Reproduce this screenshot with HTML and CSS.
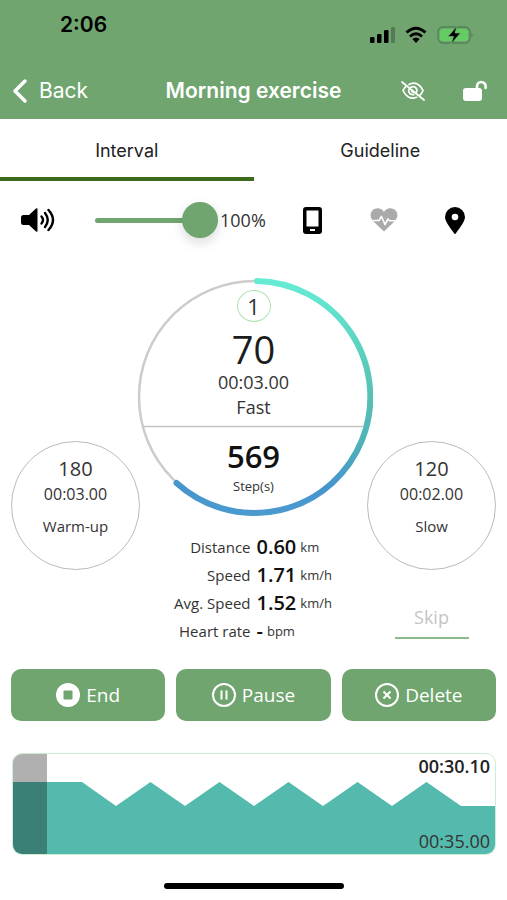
FILE: index.html
```html
<!DOCTYPE html>
<html lang="en">
<head>
<meta charset="utf-8">
<meta name="viewport" content="width=device-width, initial-scale=1">
<title>Morning exercise</title>
<link rel="stylesheet" href="styles.css">
</head>
<body>
<header class="header">
  <div class="status">
    <time class="clock">2:06</time>
    <div class="status-icons">
      <svg width="26" height="18" viewBox="0 0 26 18"><rect x="1" y="11" width="4.500" height="6" rx="1.200"/><rect x="8" y="8" width="4.500" height="9" rx="1.200"/><rect x="15" y="4" width="4.500" height="13" rx="1.200"/><rect x="22" y="1" width="4" height="16" rx="1.200" opacity=".25"/></svg>
      <svg width="22" height="18" viewBox="0 0 22 18"><g fill="none" stroke="#000" stroke-width="3"><path d="M1.500 6.500Q11-2 20.500 6.500"/><path d="M5 10.500Q11 5 17 10.500"/></g><path d="M7.300 13Q11 10 14.700 13L11 17Z"/></svg>
      <svg width="37" height="20" viewBox="0 0 37 20"><rect x="1" y="2" width="32" height="16" rx="5" fill="none" stroke="#4f8355" stroke-width="1.300"/><rect x="3" y="4" width="28" height="12" rx="3" fill="#65cc63"/><path d="M34.500 7.500q2 2.500 0 5z" fill="#43744a"/><path d="M20 1 11 11.500h5.500L14 19l9.500-11H18z" stroke="#70a56f" stroke-width=".8"/></svg>
    </div>
  </div>
  <nav class="nav">
    <a class="back" href="#"><svg width="16" height="26" viewBox="0 0 16 26"><path d="M13 3 3 13l10 10" fill="none" stroke="#fff" stroke-width="3.500" stroke-linecap="round" stroke-linejoin="round"/></svg>Back</a>
    <h1 class="title">Morning exercise</h1>
    <div class="nav-actions">
      <button class="icon-button" aria-label="Hide display"><svg width="24" height="20" viewBox="0 0 24 20" fill="none" stroke="#fff" stroke-width="1.700" stroke-linecap="round"><path d="M8 3.500C14-.2 19.500 3.800 22 9.500c-.8 2-1.800 3.500-3.200 4.800M15.500 16.300C9.500 18.800 4.500 15 2 9.500c.8-1.700 1.800-3.100 3-4.200"/><path d="M9.500 6.400c4-2.400 7.800 1.600 5.800 5M12.800 13.600C8.500 14 6.800 10.600 8.200 7.900M10.800 9.300a2 2 0 0 0 1.800 2"/><path d="M1 1l22 18"/></svg></button>
      <button class="icon-button" aria-label="Unlock"><svg width="24" height="22" viewBox="0 0 24 22"><rect x="0" y="8" width="19" height="13" rx="3" fill="#fff"/><path d="M14 9V6.300a4.300 4.300 0 0 1 8.600 0V8" fill="none" stroke="#fff" stroke-width="2.600" stroke-linecap="round"/></svg></button>
    </div>
  </nav>
</header>

<main>
  <nav class="tabs">
    <a class="tab tab-active" href="#">Interval</a>
    <a class="tab" href="#">Guideline</a>
  </nav>

  <section class="controls">
    <svg width="34" height="24" viewBox="0 0 34 24"><path d="M2.500 7H8l7-6.500q1.500-1 1.500.8v21.400q0 1.800-1.500.8L8 17H2.500Q0 17 0 14.500v-5Q0 7 2.500 7z"/><g fill="none" stroke="#000" stroke-width="2.400" stroke-linecap="round"><path d="M20.500 8.500q3 3.500 0 7"/><path d="M24 5q5.500 7 0 14"/><path d="M27.500 2q9 10 0 20"/></g></svg>
    <input class="volume" id="volume" type="range" min="0" max="100" value="100" aria-label="Volume">
    <label class="volume-value" for="volume">100%</label>
    <div class="indicators">
      <svg width="20" height="27" viewBox="0 0 20 27"><path fill-rule="evenodd" d="M3 0h13q3 0 3 3v21q0 3-3 3H3q-3 0-3-3V3Q0 0 3 0zm.5 3.500v16h12v-16zM7 22v2h5v-2z"/></svg>
      <svg width="28" height="24" viewBox="0 0 28 24"><path fill="#aaa" d="M14 23.500 3.500 13.500C-1 9 0 3 4.500 1 8-.6 12 .5 14 4c2-3.500 6-4.600 9.500-3C28 3 29 9 24.500 13.500z"/><path d="M3 12.500h6l2.500-4 3.500 8 3-5.500 1.500 1.800H25" fill="none" stroke="#fff" stroke-width="1.600" stroke-linejoin="round"/></svg>
      <svg width="20" height="27" viewBox="0 0 20 27"><path fill-rule="evenodd" d="M10 0a10 10 0 0 1 10 10c0 5-7 13-9 16.300q-1 1.300-2 0C7 23 0 15 0 10A10 10 0 0 1 10 0zm0 6.700a3.300 3.300 0 1 0 0 6.600 3.300 3.300 0 0 0 0-6.600z"/></svg>
    </div>
  </section>

  <section class="session">
    <div class="side">
      <div class="phase"><span class="phase-count">180</span><span class="phase-time">00:03.00</span><span class="phase-name">Warm-up</span></div>
    </div>
    <div class="center">
      <div class="ring">
        <svg class="ring-art" viewBox="0 0 238 238">
          <defs><linearGradient id="arc" gradientUnits="userSpaceOnUse" x1="0" y1="0" x2="0" y2="238"><stop offset="0" stop-color="#66edd5"/><stop offset=".5" stop-color="#57bfb3"/><stop offset=".68" stop-color="#50b4b8"/><stop offset=".88" stop-color="#4694cd"/><stop offset="1" stop-color="#4b9bcf"/></linearGradient></defs>
          <circle cx="120" cy="119" r="116" fill="none" stroke="#ccc" stroke-width="2.500"/>
          <path d="M8 148.500H228" stroke="#c4c4c4" stroke-width="1.300"/>
          <path d="M122 3A116 116 0 1 1 41.500 205" fill="none" stroke="url(#arc)" stroke-width="6" stroke-linecap="round"/>
        </svg>
        <div class="ring-text">
          <span class="round">1</span>
          <span class="target">70</span>
          <span class="ring-line">00:03.00</span>
          <span class="ring-line">Fast</span>
          <span class="steps">569</span>
          <span class="steps-unit">Step(s)</span>
        </div>
      </div>
      <dl class="stats">
        <dt>Distance</dt><dd><b>0.60</b> km</dd>
        <dt>Speed</dt><dd><b>1.71</b> km/h</dd>
        <dt>Avg. Speed</dt><dd><b>1.52</b> km/h</dd>
        <dt>Heart rate</dt><dd><b>-</b> bpm</dd>
      </dl>
    </div>
    <div class="side">
      <div class="phase"><span class="phase-count">120</span><span class="phase-time">00:02.00</span><span class="phase-name">Slow</span></div>
      <button class="skip">Skip</button>
    </div>
  </section>

  <section class="actions">
    <button class="action"><svg width="24" height="24" viewBox="0 0 24 24"><circle cx="12" cy="12" r="12" fill="#fff"/><rect x="7.500" y="7.500" width="9" height="9" rx="1" fill="#70a56f"/></svg>End</button>
    <button class="action"><svg width="24" height="24" viewBox="0 0 24 24" fill="none" stroke="#fff" stroke-width="2"><circle cx="12" cy="12" r="11"/><path d="M9.500 7.500v9M14.500 7.500v9"/></svg>Pause</button>
    <button class="action"><svg width="24" height="24" viewBox="0 0 24 24" fill="none" stroke="#fff" stroke-width="2"><circle cx="12" cy="12" r="11"/><path d="M8.500 8.500l7 7M15.500 8.500l-7 7"/></svg>Delete</button>
  </section>

  <section class="chart">
    <svg class="chart-art" viewBox="0 0 482 100" preserveAspectRatio="none">
      <path fill="#54baad" d="M0 28H69L103 52 137.500 28 172 52 206.500 28 241 52 275.500 28 310 52 344.500 28 379 52 413.500 28 448 52H482V100H0Z"/>
      <rect width="34" height="100" fill="#000" opacity=".31"/>
    </svg>
    <div class="chart-times"><strong>00:30.10</strong><span>00:35.00</span></div>
  </section>
</main>
<div class="home-bar"></div>
</body>
</html>
```
FILE: styles.css
```css
* { box-sizing: border-box; }

body {
  margin: 0;
  background: #fff;
  color: #333;
  font-family: "Open Sans", "Noto Sans", sans-serif;
}

svg { display: block; flex: none; }

button {
  border: 0;
  padding: 0;
  background: none;
  font: inherit;
  cursor: pointer;
}

a { color: inherit; text-decoration: none; }

.header {
  background: #70a56f;
  font-family: Inter, sans-serif;
}

.status {
  display: flex;
  justify-content: space-between;
  height: 62px;
  padding: 12px 33px 0 60px;
}

.clock {
  color: #000;
  font-size: 21px;
  font-weight: 600;
  line-height: 26px;
}

.status-icons {
  display: flex;
  align-items: center;
  gap: 10px;
  height: 46px;
}

.nav {
  display: grid;
  grid-template-columns: 1fr auto 1fr;
  align-items: center;
  height: 57px;
  padding: 0 12px;
  color: #fff;
  font-size: 21px;
}

.back { display: flex; align-items: center; gap: 11px; }

.title { margin: 0; font-size: 21px; font-weight: 600; }

.nav-actions {
  display: flex;
  justify-content: flex-end;
  align-items: center;
  gap: 38px;
  padding-right: 8px;
}

.tabs { display: flex; height: 62px; }

.tab {
  flex: 1;
  border-bottom: 4px solid transparent;
  color: #222;
  font-family: Inter, sans-serif;
  font-size: 18px;
  line-height: 63px;
  text-align: center;
}

.tab-active { border-color: #3c6b20; }

.controls {
  display: flex;
  align-items: center;
  height: 78px;
  padding: 0 19px 0 21px;
}

.volume {
  width: 123px;
  height: 36px;
  margin: 0 2px 0 40px;
  appearance: none;
  background: none;
}

.volume::-webkit-slider-runnable-track {
  height: 5px;
  border-radius: 3px;
  background: #70a56f;
}

.volume::-webkit-slider-thumb {
  width: 36px;
  height: 36px;
  margin-top: -16px;
  appearance: none;
  border-radius: 50%;
  background: #70a56f;
  box-shadow: 0 5px 12px rgba(0, 0, 0, .14);
}

.volume-value { font-size: 18px; }

.indicators {
  display: flex;
  flex: 1;
  align-items: center;
  justify-content: space-around;
  margin-left: 14px;
}

.session {
  display: grid;
  grid-template-columns: 129px 1fr 129px;
  margin-top: 19px;
  padding: 0 11px;
}

.side {
  display: flex;
  flex-direction: column;
  align-items: center;
  padding-top: 163px;
}

.phase {
  display: flex;
  flex-direction: column;
  align-items: center;
  width: 129px;
  height: 129px;
  padding-top: 14px;
  border: 1px solid #bbb;
  border-radius: 50%;
}

.phase-count { font-size: 20px; line-height: 26px; }
.phase-time { font-size: 16px; line-height: 24px; }
.phase-name { margin-top: 8px; font-size: 15px; line-height: 24px; }

.skip {
  width: 74px;
  height: 42px;
  margin-top: 27px;
  border-bottom: 2px solid #88bb8d;
  color: #c4c4c4;
  font-size: 18px;
}

.center {
  display: flex;
  flex-direction: column;
  align-items: center;
  margin: 0 -6px;
}

.ring { display: grid; width: 238px; }
.ring-art, .ring-text { grid-area: 1 / 1; }

.ring-text {
  display: flex;
  flex-direction: column;
  align-items: center;
  padding-top: 12px;
}

.round {
  width: 34px;
  height: 32px;
  border: 1px solid #a9e2b0;
  border-radius: 50%;
  font-size: 22px;
  line-height: 30px;
  text-align: center;
}

.target {
  margin-top: 6px;
  color: #1c1c1c;
  font-size: 38px;
  line-height: 42px;
}

.ring-line { font-size: 18px; line-height: 25px; }

.steps {
  margin-top: 16px;
  color: #111;
  font-size: 31px;
  font-weight: 600;
  line-height: 40px;
}

.steps-unit { font-size: 13px; line-height: 20px; }

.stats {
  display: grid;
  grid-template-columns: 1fr 1fr;
  grid-auto-rows: 28px;
  column-gap: 6px;
  width: 100%;
  margin: 17px 0 0;
  font-size: 15px;
  line-height: 28px;
}

.stats dt { text-align: right; }

.stats dd {
  display: flex;
  gap: 4px;
  align-items: center;
  margin: 0;
  font-size: 13px;
}

.stats b { color: #111; font-size: 20px; font-weight: 600; }

.actions {
  display: grid;
  grid-template-columns: repeat(3, 1fr);
  gap: 11px;
  margin-top: 24px;
  padding: 0 11px;
}

.action {
  display: flex;
  align-items: center;
  justify-content: center;
  gap: 6px;
  height: 52px;
  border-radius: 10px;
  background: #70a56f;
  color: #fff;
  font-size: 19px;
}

.chart {
  display: grid;
  margin: 32px 11px 0 12px;
  overflow: hidden;
  border: 1px solid #cdeed3;
  border-radius: 10px;
}

.chart-art { grid-area: 1 / 1; width: 100%; height: 100px; }

.chart-times {
  display: flex;
  grid-area: 1 / 1;
  flex-direction: column;
  justify-content: space-between;
  align-items: flex-end;
  padding-right: 5px;
  font-size: 18px;
  line-height: 25px;
}

.chart-times strong { color: #222; font-weight: 600; }

.home-bar {
  width: 180px;
  height: 6px;
  margin: 28px auto 11px;
  border-radius: 3px;
  background: #000;
}
```
